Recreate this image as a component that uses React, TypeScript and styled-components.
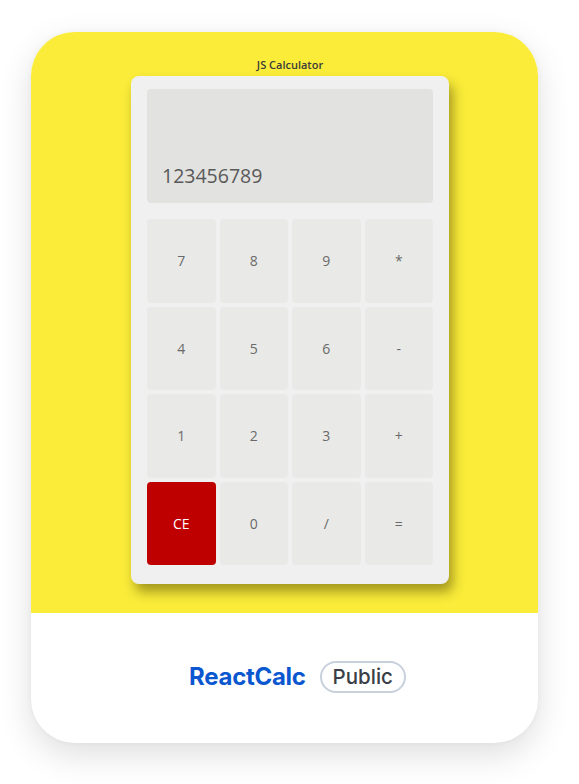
import React from "react";
import styled, { createGlobalStyle } from "styled-components";

const GlobalStyle = createGlobalStyle`
  html, body { margin: 0; padding: 0; background: #ffffff; }
  * { box-sizing: border-box; }
`;

const Page = styled.div`
  width: 579px;
  height: 784px;
  padding: 32px 41px 0 31px;
  background: #ffffff;
`;

const Card = styled.div`
  width: 507px;
  height: 711px;
  border-radius: 44px;
  overflow: hidden;
  background: #ffffff;
  box-shadow: 0 12px 34px rgba(0, 0, 0, 0.13), 0 0 6px rgba(0, 0, 0, 0.04);
  display: flex;
  flex-direction: column;
`;

const Preview = styled.div`
  height: 581px;
  background: #faec39;
  display: flex;
  flex-direction: column;
  align-items: center;
  padding: 25px 89px 0 100px;
`;

const Title = styled.div`
  font-family: "Open Sans", "Noto Sans", sans-serif;
  font-size: 11px;
  font-weight: 600;
  line-height: 16px;
  color: #3a3a3a;
`;

const Calculator = styled.div`
  margin-top: 3px;
  width: 318px;
  padding: 13px 16px 19px 16px;
  background: #f0f0f0;
  border-radius: 8px;
  box-shadow: 4px 8px 12px rgba(60, 50, 0, 0.45);
`;

const Display = styled.div`
  height: 114px;
  background: #e2e2e0;
  border-radius: 4px;
  display: flex;
  align-items: flex-end;
  padding: 0 15px 13px;
  font-family: "Open Sans", "Noto Sans", sans-serif;
  font-size: 19.5px;
  font-weight: 500;
  line-height: 28px;
  color: #595959;
`;

const Keys = styled.div`
  margin-top: 16px;
  display: grid;
  grid-template-columns: repeat(4, 1fr);
  grid-auto-rows: 83.5px;
  gap: 4px;
`;

const Key = styled.div<{ $danger?: boolean }>`
  display: flex;
  align-items: center;
  justify-content: center;
  border-radius: 4px;
  background: ${(p) => (p.$danger ? "#bf0000" : "#e9e9e7")};
  color: ${(p) => (p.$danger ? "#ffffff" : "#6a6a6a")};
  font-family: "Open Sans", "Noto Sans", sans-serif;
  font-size: 14px;
`;

const Footer = styled.div`
  flex: 1;
  display: flex;
  align-items: center;
  justify-content: center;
  gap: 14px;
  padding: 0 0 3px 26px;
  font-family: Inter, "Liberation Sans", sans-serif;
`;

const RepoName = styled.span`
  font-size: 24px;
  font-weight: 700;
  color: #0b57d0;
  letter-spacing: -0.3px;
`;

const Badge = styled.span`
  height: 32px;
  display: inline-flex;
  align-items: center;
  padding: 0 11px;
  border: 2px solid #c8d0dc;
  border-radius: 16px;
  font-size: 20.5px;
  font-weight: 500;
  color: #3a3f47;
`;

const keys = ["7", "8", "9", "*", "4", "5", "6", "-", "1", "2", "3", "+", "CE", "0", "/", "="];

export default function App() {
  return (
    <>
      <GlobalStyle />
      <Page>
        <Card>
          <Preview>
            <Title>JS Calculator</Title>
            <Calculator>
              <Display>123456789</Display>
              <Keys>
                {keys.map((k) => (
                  <Key key={k} $danger={k === "CE"}>
                    {k}
                  </Key>
                ))}
              </Keys>
            </Calculator>
          </Preview>
          <Footer>
            <RepoName>ReactCalc</RepoName>
            <Badge>Public</Badge>
          </Footer>
        </Card>
      </Page>
    </>
  );
}
